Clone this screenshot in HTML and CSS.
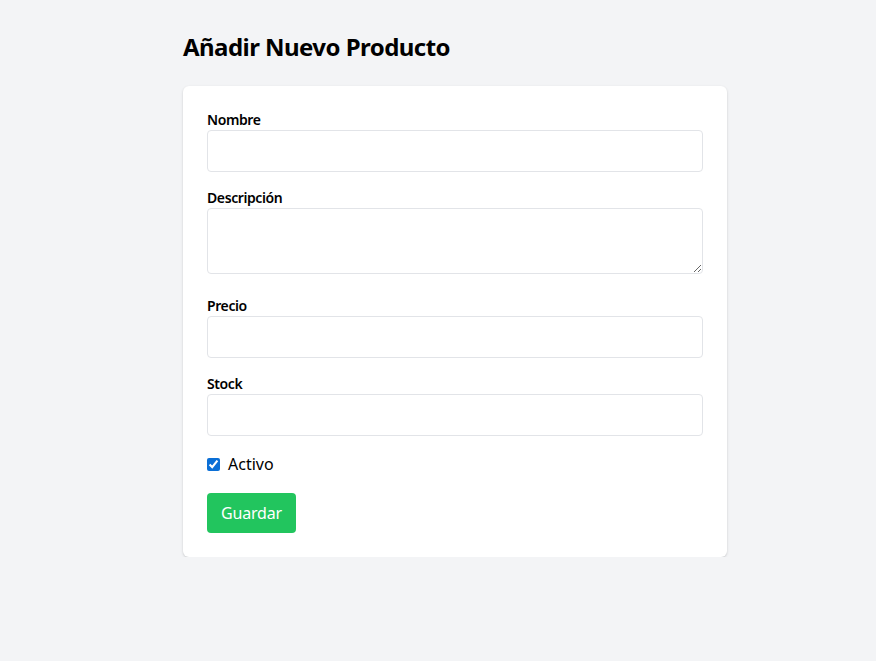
FILE: index.html
```html
<!DOCTYPE html>
<html lang="es">
<head>
<meta charset="utf-8">
<title>Añadir Nuevo Producto</title>
<link rel="stylesheet" href="styles.css">
</head>
<body>
<main class="page">
  <h1 class="title">Añadir Nuevo Producto</h1>
  <form class="card">
    <div class="field">
      <label class="label" for="nombre">Nombre</label>
      <input class="input" id="nombre" type="text">
    </div>
    <div class="field">
      <label class="label" for="descripcion">Descripción</label>
      <textarea class="input textarea" id="descripcion"></textarea>
    </div>
    <div class="field">
      <label class="label" for="precio">Precio</label>
      <input class="input" id="precio" type="text">
    </div>
    <div class="field">
      <label class="label" for="stock">Stock</label>
      <input class="input" id="stock" type="text">
    </div>
    <div class="check-row">
      <input class="checkbox" id="activo" type="checkbox" checked>
      <label class="check-label" for="activo">Activo</label>
    </div>
    <button class="btn" type="button">Guardar</button>
  </form>
</main>
</body>
</html>
```
FILE: styles.css
```css
* { box-sizing: border-box; }
html, body { margin: 0; padding: 0; }
body {
  background: #f3f4f6;
  font-family: "Noto Sans", "Open Sans", sans-serif;
  color: #111;
}
.page {
  width: 544px;
  margin-left: 183px;
  padding-top: 31px;
}
.title {
  margin: 0 0 23px 0;
  font-size: 24px;
  line-height: 32px;
  font-weight: 700;
  letter-spacing: -0.55px;
  color: #000;
}
.card {
  background: #fff;
  border-radius: 6px;
  box-shadow: 0 1px 3px rgba(0,0,0,0.12), 0 1px 2px rgba(0,0,0,0.06);
  padding: 24px;
  display: flex;
  flex-direction: column;
}
.field {
  display: flex;
  flex-direction: column;
  margin-bottom: 16px;
}
.label {
  font-size: 14px;
  line-height: 20px;
  font-weight: 600;
  letter-spacing: -0.4px;
  color: #000;
}
.input {
  height: 42px;
  width: 100%;
  border: 1px solid #e2e4e8;
  border-radius: 4px;
  padding: 8px 12px;
  font-family: inherit;
  font-size: 16px;
  background: #fff;
  margin: 0;
}
.textarea {
  height: 66px;
  resize: vertical;
  margin-bottom: 6px;
}
.check-row {
  display: flex;
  align-items: center;
  gap: 8px;
  height: 24px;
  margin-bottom: 17px;
}
.checkbox {
  width: 13px;
  height: 13px;
  margin: 0;
  accent-color: #0b6fd6;
}
.check-label {
  font-size: 16px;
  line-height: 24px;
  color: #000;
}
.btn {
  align-self: flex-start;
  height: 40px;
  width: 89px;
  padding: 0;
  border: 0;
  border-radius: 4px;
  background: #22c55e;
  color: #fff;
  font-family: inherit;
  font-size: 16px;
  letter-spacing: -0.2px;
  cursor: pointer;
}
```
